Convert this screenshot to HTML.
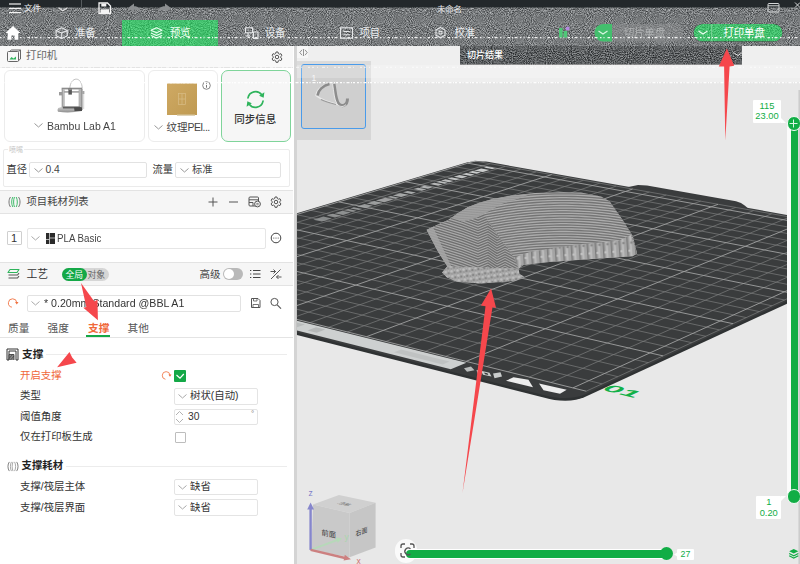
<!DOCTYPE html>
<html lang="zh-CN">
<head>
<meta charset="utf-8">
<title>Bambu Studio</title>
<style>
*{box-sizing:border-box;margin:0;padding:0}
html,body{width:800px;height:564px;overflow:hidden;background:#fff}
body{position:relative;font-family:"Liberation Sans","Noto Sans CJK SC",sans-serif;font-size:12px;color:#3c3c3c;-webkit-font-smoothing:antialiased}
.abs{position:absolute}
.t{position:absolute;white-space:nowrap;line-height:14px;height:14px;font-size:12px;color:#444}
.box{position:absolute;border:1px solid #e2e2e2;background:#fff;border-radius:2px}
.chev{position:absolute;width:9px;height:5px}
svg{position:absolute;overflow:visible}
#top{position:absolute;left:0;top:0;width:800px;height:45.5px;background:#7d7f80;overflow:hidden}
#left{position:absolute;left:0;top:0;width:293px;height:564px;background:#fff;overflow:hidden}
#view{position:absolute;left:293px;top:45px;width:507px;height:519px;background:#e8e8e8;overflow:hidden}
.hdr{position:absolute;left:0;width:293px;background:#f6f6f6;border-top:1px solid #e3e3e3;border-bottom:1px solid #e3e3e3}
.card{position:absolute;background:#fff;border:1px solid #ececec;border-radius:6px}
.tw{color:#fff}
</style>
</head>
<body>

<div id="left">
<!-- printer header -->
<div class="hdr" style="top:45px;height:23px;border-top:none;background:#f8f8f8"></div>
<svg width="16" height="14" style="left:6px;top:49px" viewBox="0 0 16 14"><g fill="none" stroke="#666" stroke-width="1"><rect x="1.500" y="2.500" width="11" height="10" rx="1"/><path d="M3.500 2.500 l2 -1.500 h9 v9 l-2 1.500 M12.500 2.500 l2 -1.500"/></g><path d="M3.500 10.500 l2 -2.500 2 1.500 2.500 -2 v3z" fill="#2fb45c"/></svg>
<div class="t" style="left:26px;top:49px;font-size:10.4px;color:#666">打印机</div>
<svg width="12" height="12" style="left:271px;top:50.500px" viewBox="0 0 24 24"><path d="M12 8.500a3.500 3.500 0 1 0 0 7a3.500 3.500 0 0 0 0-7z M10 2h4l.6 3 2.400 1.400 2.900-1 2 3.500-2.300 2v2.800l2.300 2-2 3.500-2.900-1-2.400 1.400-.6 3h-4l-.6-3-2.400-1.400-2.900 1-2-3.500 2.300-2v-2.800l-2.300-2 2-3.500 2.900 1 2.400-1.400z" fill="none" stroke="#555" stroke-width="2" stroke-linejoin="round"/></svg>
<!-- printer card -->
<div class="card" style="left:3.500px;top:70px;width:141.500px;height:71.500px"></div>
<svg width="34" height="38" style="left:54px;top:76px" viewBox="54 76 34 38">
<defs><linearGradient id="pbase" x1="0" y1="0" x2="0" y2="1"><stop offset="0" stop-color="#d2d2d2"/><stop offset="1" stop-color="#8f8f8f"/></linearGradient></defs>
<path d="M69.800 88.500 C70.500 76 82 76 82.200 88.500" fill="none" stroke="#9a9a9a" stroke-width="0.600"/>
<rect x="61.600" y="87.700" width="20.600" height="1.700" fill="#8c8c8c"/>
<rect x="61.800" y="89" width="3" height="19" fill="#bdbdbd"/><rect x="61.800" y="89" width="0.800" height="19" fill="#8e8e8e"/>
<rect x="78.600" y="89" width="3.700" height="21" fill="#b4b4b4"/><rect x="81.500" y="89" width="0.900" height="21" fill="#7d7d7d"/>
<rect x="64" y="91.100" width="15" height="1.600" fill="#a2a2a2"/>
<rect x="68.400" y="88.600" width="3.500" height="6" fill="#5a5a5a"/><rect x="68.400" y="88.600" width="3.500" height="1.500" fill="#8a8a8a"/>
<rect x="59" y="92" width="3" height="3.400" fill="#9b9b9b"/><rect x="82.200" y="91" width="2.200" height="3" fill="#a5a5a5"/>
<path d="M83.700 94 V109" stroke="#aaaaaa" stroke-width="0.500"/>
<path d="M58.200 108 L63 106.600 H80.500 L82 108 V111 Q70 113.500 58 111.800 Q56.800 110 58.200 108Z" fill="url(#pbase)"/>
<path d="M62.500 106.600 H80 L81.500 108.600 H63Z" fill="#5e5e5e"/>
<path d="M74 107.200 H82 V111 H74.500Z" fill="#4c4c4c"/>
</svg>
<svg class="chev" style="left:33.500px;top:123px" viewBox="0 0 9 5"><polyline points="0.500,0.500 4.500,4 8.500,0.500" fill="none" stroke="#999" stroke-width="1"/></svg>
<div class="t" style="left:47px;top:118.500px;font-size:11.4px;color:#444;transform:scaleX(.922);transform-origin:0 50%">Bambu Lab A1</div>
<!-- plate card -->
<div class="card" style="left:148px;top:70px;width:69.500px;height:71.500px"></div>
<svg width="34" height="36" style="left:165px;top:81px" viewBox="0 0 34 36"><defs><linearGradient id="gold" x1="0" y1="0" x2="1" y2="1"><stop offset="0" stop-color="#cfa963"/><stop offset="1" stop-color="#bf9a52"/></linearGradient></defs><rect x="2" y="2.500" width="30" height="31.500" fill="url(#gold)"/><rect x="12" y="33.500" width="18" height="1.300" fill="#d8c9a6"/><g fill="none" stroke="#d9bd86" stroke-width="0.700"><rect x="13.500" y="12.500" width="7" height="11"/><path d="M17 12.500 v11 M13.500 18 h7"/></g></svg>
<svg width="9" height="9" style="left:201.500px;top:81px" viewBox="0 0 9 9"><circle cx="4.500" cy="4.500" r="3.800" fill="#fff" stroke="#666" stroke-width="0.800"/><path d="M4.500 2.300 v.8 M4.500 4 v2.700" stroke="#666" stroke-width="0.900"/></svg>
<svg class="chev" style="left:154px;top:124.500px" viewBox="0 0 9 5"><polyline points="0.500,0.500 4.500,4 8.500,0.500" fill="none" stroke="#999" stroke-width="1"/></svg>
<div class="t" style="left:166.500px;top:120px;font-size:10.5px;color:#444">纹理<span style="letter-spacing:-0.6px">PEI...</span></div>
<!-- sync card -->
<div class="card" style="left:220.500px;top:70px;width:70.500px;height:72px;background:#f6f6f6;border:1px solid #7fd49a;border-radius:7px"></div>
<svg width="23" height="23" style="left:243.500px;top:87.500px" viewBox="0 0 22 22"><g fill="none" stroke="#2fb45c" stroke-width="1.600" stroke-linecap="round"><path d="M3.800 9.500 A7.400 7.400 0 0 1 17 6.500"/><path d="M18.200 12.500 A7.400 7.400 0 0 1 5 15.500"/></g><path d="M14.500 7.500 L19.500 4 L18.800 9.300Z" fill="#2fb45c"/><path d="M7.500 14.500 L2.500 18 L3.200 12.700Z" fill="#2fb45c"/></svg>
<div class="t" style="left:234.300px;top:112px;font-size:10.5px;color:#333;font-weight:500">同步信息</div>
<!-- nozzle group -->
<div class="abs" style="left:3px;top:149px;width:287px;height:38px;border:1px solid #ebebeb;border-radius:2px"></div>
<div class="t" style="left:8px;top:142.500px;font-size:7px;color:#c4c4c4;background:#fff;padding:0 1px">喷嘴</div>
<div class="t" style="left:6.500px;top:162.500px;font-size:10.2px;color:#333">直径</div>
<div class="box" style="left:29px;top:161.500px;width:117.500px;height:16.500px"></div>
<svg class="chev" style="left:33.500px;top:167.500px" viewBox="0 0 9 5"><polyline points="0.500,0.500 4.500,4 8.500,0.500" fill="none" stroke="#999" stroke-width="1"/></svg>
<div class="t" style="left:45.500px;top:163px;font-size:10.3px;color:#444">0.4</div>
<div class="t" style="left:152.500px;top:162.500px;font-size:10.2px;color:#333">流量</div>
<div class="box" style="left:175px;top:161.500px;width:106px;height:16.500px"></div>
<svg class="chev" style="left:179.500px;top:167.500px" viewBox="0 0 9 5"><polyline points="0.500,0.500 4.500,4 8.500,0.500" fill="none" stroke="#999" stroke-width="1"/></svg>
<div class="t" style="left:192px;top:162.500px;font-size:10.2px;color:#444">标准</div>
<!-- filament header -->
<div class="hdr" style="top:190px;height:23.500px"></div>
<svg width="13" height="12" style="left:7.500px;top:196px" viewBox="0 0 13 12"><g fill="none" stroke-width="0.900"><path d="M2.500 1 C0.500 3.500 0.500 8.500 2.500 11" stroke="#666"/><path d="M10.500 1 C12.500 3.500 12.500 8.500 10.500 11" stroke="#666"/><path d="M4.800 1 C3.300 3.500 3.300 8.500 4.800 11 M6.500 1 C5.300 3.500 5.300 8.500 6.500 11 M8.200 1 C9.700 3.500 9.700 8.500 8.200 11" stroke="#2fb45c"/></g></svg>
<div class="t" style="left:26.500px;top:195px;font-size:10.35px;color:#444">项目耗材列表</div>
<svg width="80" height="14" style="left:205px;top:195px" viewBox="205 195 80 14"><g fill="none" stroke="#555" stroke-width="1"><path d="M208.500 202 h9 M213 197.500 v9"/><path d="M229 202 h9"/><rect x="249" y="197" width="9.500" height="9" rx="1"/><path d="M249 199.800 h9.500 M249 202.500 h4 M253 202.500 v3.500"/><circle cx="257.500" cy="204" r="2.900" fill="#f6f6f6"/><path d="M256.300 203.400 h2.400 M256.300 204.800 h2.400" stroke-width="0.700"/></g></svg>
<svg width="12" height="12" style="left:269.500px;top:196px" viewBox="0 0 24 24"><path d="M12 8.500a3.500 3.500 0 1 0 0 7a3.500 3.500 0 0 0 0-7z M10 2h4l.6 3 2.400 1.400 2.900-1 2 3.500-2.300 2v2.800l2.300 2-2 3.500-2.900-1-2.400 1.400-.6 3h-4l-.6-3-2.400-1.400-2.900 1-2-3.500 2.300-2v-2.800l-2.300-2 2-3.500 2.900 1 2.400-1.400z" fill="none" stroke="#555" stroke-width="2" stroke-linejoin="round"/></svg>
<!-- filament row -->
<div class="box" style="left:7px;top:231px;width:14.500px;height:14px;border-color:#cfcfcf;border-radius:1px"></div>
<div class="t" style="left:11px;top:231px;font-size:11px;color:#333">1</div>
<div class="box" style="left:26.500px;top:227.500px;width:239px;height:21px;border-color:#e6e6e6"></div>
<svg class="chev" style="left:31px;top:236px" viewBox="0 0 9 5"><polyline points="0.500,0.500 4.500,4 8.500,0.500" fill="none" stroke="#aaa" stroke-width="1"/></svg>
<svg width="9" height="11" style="left:45.500px;top:232.500px" viewBox="0 0 9 11"><rect x="0" y="0" width="9" height="11" fill="#2b2b2b"/><path d="M3.500 0 v11 M3.500 5 h5.500 M0 6.500 h3.500" stroke="#d8d8d8" stroke-width="0.800"/></svg>
<div class="t" style="left:57px;top:231px;font-size:10.6px;color:#444;transform:scaleX(.92);transform-origin:0 50%">PLA Basic</div>
<svg width="12" height="12" style="left:269.500px;top:232px" viewBox="0 0 12 12"><circle cx="6" cy="6" r="4.800" fill="none" stroke="#444" stroke-width="1"/><circle cx="3.800" cy="6" r=".6" fill="#444"/><circle cx="6" cy="6" r=".6" fill="#444"/><circle cx="8.200" cy="6" r=".6" fill="#444"/></svg>
<!-- process header -->
<div class="hdr" style="top:262px;height:24px"></div>
<svg width="13" height="12" style="left:7px;top:268px" viewBox="0 0 13 12"><g fill="none" stroke-width="1.100" stroke-linejoin="round"><path d="M3 1.500 H12 L10 4.500 H1Z" stroke="#2fb45c"/><path d="M1.500 7 H10.500 L12 5.200" stroke="#555"/><path d="M1.500 10 H10.500 L12 8.200" stroke="#555"/></g></svg>
<div class="t" style="left:26.500px;top:267px;font-size:10.800px;color:#333">工艺</div>
<div class="abs" style="left:62px;top:267.500px;width:47px;height:13.500px;border-radius:7px;background:#d6d6d6"></div>
<div class="abs" style="left:62px;top:267.500px;width:24.500px;height:13.500px;border-radius:7px;background:#14a847"></div>
<div class="t" style="left:65.500px;top:267.500px;font-size:8.800px;color:#fff">全局</div>
<div class="t" style="left:87.500px;top:267.500px;font-size:8.800px;color:#666">对象</div>
<div class="t" style="left:199.500px;top:267px;font-size:10.500px;color:#444">高级</div>
<div class="abs" style="left:222.500px;top:268px;width:20px;height:12px;border-radius:6px;background:#b9b9b9"></div>
<div class="abs" style="left:223.500px;top:269px;width:10px;height:10px;border-radius:5px;background:#fff"></div>
<svg width="34" height="12" style="left:249px;top:268px" viewBox="249 268 34 12"><g fill="none" stroke="#444" stroke-width="1.100"><path d="M253 270.500 h7.500 M253 274 h7.500 M253 277.500 h7.500"/><path d="M250 270.500 h1.300 M250 274 h1.300 M250 277.500 h1.300"/><path d="M271 279 L280.500 269.500" stroke-width="0.900"/><path d="M270.500 271.500 h5 m-2 -2 l2 2 -2 2" stroke-width="0.900"/><path d="M281.500 277 h-5 m2 -2 l-2 2 2 2" stroke-width="0.900"/></g></svg>
<!-- preset row -->
<svg width="12" height="12" style="left:7px;top:297px" viewBox="0 0 12 12"><path d="M4.87 10.14 A4.2 4.2 0 1 1 9.78 5.63" fill="none" stroke="#f0713f" stroke-width="0.9"/><path d="M8.08 5.03 h3.4 l-1.7 2.4 z" fill="#f0713f"/></svg>
<div class="box" style="left:26.500px;top:294.500px;width:214.500px;height:17px;border-color:#e2e2e2"></div>
<svg class="chev" style="left:31px;top:301px" viewBox="0 0 9 5"><polyline points="0.500,0.500 4.500,4 8.500,0.500" fill="none" stroke="#aaa" stroke-width="1"/></svg>
<div class="t" style="left:43.500px;top:296px;font-size:11px;color:#333;transform:scaleX(.966);transform-origin:0 50%">* 0.20mm Standard @BBL A1</div>
<svg width="34" height="12" style="left:249px;top:297px" viewBox="249 297 34 12"><g fill="none" stroke="#555" stroke-width="1"><path d="M251.500 298.500 H258 L260 300.500 V307.500 H251.500Z"/><path d="M253.500 298.500 v2.500 h3.500 v-2.500 M253 307.500 v-3 h5.500 v3" stroke-width="0.800"/><circle cx="274.500" cy="302" r="3.600"/><path d="M277.200 304.800 L281 308.600" stroke-width="1.200"/></g></svg>
<!-- tabs -->
<div class="t" style="left:8px;top:321px;font-size:10.700px;color:#555">质量</div>
<div class="t" style="left:47.500px;top:321px;font-size:10.700px;color:#555">强度</div>
<div class="t" style="left:88px;top:321px;font-size:10.700px;color:#f0683a;font-weight:700">支撑</div>
<div class="t" style="left:127.500px;top:321px;font-size:10.700px;color:#555">其他</div>
<div class="abs" style="left:0;top:337px;width:293px;height:1px;background:#e4e4e4"></div>
<div class="abs" style="left:86px;top:334.500px;width:24px;height:2.500px;background:#14a847"></div>
<!-- section support -->
<svg width="13" height="13" style="left:6px;top:348px" viewBox="0 0 13 13"><path d="M1 1 H12 V12 H10 V3 H3 V12 H1Z" fill="none" stroke="#333" stroke-width="1"/><path d="M3 12 V6.500 L8 6.500 V12" fill="#888" stroke="#333" stroke-width="0.800"/><path d="M3 10.500 L6.500 6.500 M4.500 12 L8 8" stroke="#333" stroke-width="0.600"/></svg>
<div class="t" style="left:22px;top:346.800px;font-size:10.700px;color:#222;font-weight:700">支撑</div>
<div class="abs" style="left:46px;top:353.800px;width:241px;height:1px;background:#ececec"></div>
<div class="t" style="left:20px;top:369px;font-size:10.400px;color:#f0683a">开启支撑</div>
<svg width="11" height="11" style="left:161px;top:370px" viewBox="0 0 12 12"><path d="M4.87 10.14 A4.2 4.2 0 1 1 9.78 5.63" fill="none" stroke="#f0713f" stroke-width="0.9"/><path d="M8.08 5.03 h3.4 l-1.7 2.4 z" fill="#f0713f"/></svg>
<div class="abs" style="left:174px;top:369.500px;width:12px;height:12px;background:#14a847;border-radius:1px"></div>
<svg width="12" height="12" style="left:174px;top:369.500px" viewBox="0 0 12 12"><polyline points="2.500,5 6,8.200 9.800,4" fill="none" stroke="#fff" stroke-width="1.200"/></svg>
<div class="t" style="left:20px;top:389px;font-size:10.400px;color:#333">类型</div>
<div class="box" style="left:173.500px;top:388px;width:84px;height:16.500px;border-color:#e4e4e4"></div>
<svg class="chev" style="left:178px;top:394px" viewBox="0 0 9 5"><polyline points="0.500,0.500 4.500,4 8.500,0.500" fill="none" stroke="#aaa" stroke-width="1"/></svg>
<div class="t" style="left:190px;top:389px;font-size:10.400px;color:#333">树状(自动)</div>
<div class="t" style="left:20px;top:409.500px;font-size:10.400px;color:#333">阈值角度</div>
<div class="box" style="left:173.500px;top:408.500px;width:84px;height:16.500px;border-color:#e4e4e4"></div>
<svg width="9" height="14" style="left:175px;top:409.500px" viewBox="0 0 9 14"><polyline points="1,5 4.500,1.500 8,5" fill="none" stroke="#aaa" stroke-width="0.900"/><polyline points="1,9 4.500,12.500 8,9" fill="none" stroke="#aaa" stroke-width="0.900"/></svg>
<div class="t" style="left:188px;top:409.500px;font-size:10.3px;color:#333">30</div>
<div class="t" style="left:251px;top:407px;font-size:8px;color:#777">°</div>
<div class="t" style="left:20px;top:430px;font-size:10.400px;color:#333">仅在打印板生成</div>
<div class="box" style="left:174.500px;top:431.500px;width:11.500px;height:11.500px;border-color:#bdbdbd;border-radius:1px"></div>
<!-- section support filament -->
<svg width="12" height="11" style="left:6.500px;top:460.500px" viewBox="0 0 13 12"><g fill="none" stroke-width="0.900" stroke="#666"><path d="M2.500 1 C0.500 3.500 0.500 8.500 2.500 11"/><path d="M10.500 1 C12.500 3.500 12.500 8.500 10.500 11"/><path d="M4.800 1 C3.300 3.500 3.300 8.500 4.800 11 M6.500 1 C5.300 3.500 5.300 8.500 6.500 11 M8.200 1 C9.700 3.500 9.700 8.500 8.200 11" stroke="#999"/></g></svg>
<div class="t" style="left:21.500px;top:458.700px;font-size:10.400px;color:#222;font-weight:700">支撑耗材</div>
<div class="abs" style="left:66px;top:465.500px;width:221px;height:1px;background:#ececec"></div>
<div class="t" style="left:20px;top:480px;font-size:10.400px;color:#333">支撑/筏层主体</div>
<div class="box" style="left:173.500px;top:478.500px;width:84px;height:16.500px;border-color:#e4e4e4"></div>
<svg class="chev" style="left:178px;top:484.500px" viewBox="0 0 9 5"><polyline points="0.500,0.500 4.500,4 8.500,0.500" fill="none" stroke="#aaa" stroke-width="1"/></svg>
<div class="t" style="left:190px;top:480px;font-size:10.400px;color:#333">缺省</div>
<div class="t" style="left:20px;top:500.500px;font-size:10.400px;color:#333">支撑/筏层界面</div>
<div class="box" style="left:173.500px;top:499px;width:84px;height:16.500px;border-color:#e4e4e4"></div>
<svg class="chev" style="left:178px;top:505px" viewBox="0 0 9 5"><polyline points="0.500,0.500 4.500,4 8.500,0.500" fill="none" stroke="#aaa" stroke-width="1"/></svg>
<div class="t" style="left:190px;top:500.500px;font-size:10.400px;color:#333">缺省</div>
</div>
<div class="abs" style="left:293.500px;top:45.500px;width:3.300px;height:519px;background:#d4d4d4"></div>

<svg width="800" height="564" style="left:0;top:0" viewBox="0 0 800 564">
<defs><clipPath id="vc"><rect x="296.8" y="45.5" width="503.2" height="518.5"/></clipPath>
<clipPath id="bedclip"><rect x="296.8" y="45.5" width="490.2" height="518.5"/></clipPath>
<pattern id="stripes" width="40" height="3.1" patternUnits="userSpaceOnUse" patternTransform="rotate(9)"><rect width="40" height="3.1" fill="#a3a3a3"/><path d="M0 2.3 Q10 1.2 20 2.3 T40 2.3" stroke="#757575" stroke-width="0.9" fill="none"/></pattern>
<pattern id="stripes2" width="40" height="3.1" patternUnits="userSpaceOnUse" patternTransform="rotate(24)"><rect width="40" height="3.1" fill="#999"/><path d="M0 2.3 H40" stroke="#6e6e6e" stroke-width="0.9" fill="none"/></pattern>
<pattern id="bumps" width="6" height="5" patternUnits="userSpaceOnUse" patternTransform="rotate(-8)"><rect width="6" height="5" fill="#a6a6a6"/><circle cx="1.5" cy="1.5" r="1.2" fill="#c2c2c2"/><circle cx="4.3" cy="3.2" r="1.1" fill="#828282"/><circle cx="4.5" cy="0.8" r="0.7" fill="#b8b8b8"/><circle cx="1.4" cy="4" r="0.7" fill="#8d8d8d"/></pattern>
<pattern id="posts" width="8" height="40" patternUnits="userSpaceOnUse" patternTransform="rotate(-4)"><rect width="8" height="40" fill="#a4a4a4"/><rect x="0" y="0" width="1.6" height="40" fill="#7e7e7e"/><rect x="3.2" y="0" width="2" height="40" fill="#bcbcbc"/><circle cx="5" cy="6" r="1.3" fill="#8a8a8a"/><circle cx="2.5" cy="14" r="1.2" fill="#c6c6c6"/><circle cx="6" cy="22" r="1.3" fill="#858585"/><circle cx="3" cy="31" r="1.2" fill="#c2c2c2"/><circle cx="6.5" cy="37" r="1" fill="#909090"/></pattern>
</defs>
<g clip-path="url(#vc)">
<rect x="296.8" y="45.5" width="503.2" height="519" fill="#e8e8e8"/>
<rect x="296.8" y="45.5" width="503.2" height="36.5" fill="#efefef"/>
<g clip-path="url(#bedclip)">
<polygon points="97.2,275.6 94.0,276.8 91.7,278.1 90.4,279.4 90.1,280.7 90.9,282.0 92.7,283.1 95.5,284.0 549.5,399.0 554.3,399.9 559.7,400.5 565.2,400.7 570.8,400.4 576.0,399.7 580.6,398.6 584.3,397.3 912.6,245.8 914.2,244.7 914.8,243.6 914.5,242.4 913.1,241.2 910.8,240.1 907.8,239.1 904.0,238.3 489.2,164.7 485.9,164.2 482.3,164.0 478.5,163.9 474.6,164.0 471.0,164.4 467.7,164.9 465.0,165.5" fill="#2f3233"/>
<polygon points="97.2,273.0 94.0,274.2 91.7,275.5 90.4,276.8 90.1,278.1 90.9,279.4 92.7,280.5 95.5,281.4 549.5,396.4 554.3,397.3 559.7,397.9 565.2,398.1 570.8,397.8 576.0,397.1 580.6,396.0 584.3,394.7 912.6,243.2 914.2,242.1 914.8,241.0 914.5,239.8 913.1,238.6 910.8,237.5 907.8,236.5 904.0,235.7 489.2,162.1 485.9,161.6 482.3,161.4 478.5,161.3 474.6,161.4 471.0,161.8 467.7,162.3 465.0,162.9" fill="#3a3c3d"/>
<polygon points="627.0,187.6 632.0,186.2 638.0,185.1 647.0,185.5 736.0,201.3 741.0,203.0 745.0,205.7 749.0,209.2" fill="#3a3c3d"/>
<path d="M121.4 275.8L490.0 163.7M122.8 266.7L602.2 383.9M137.4 279.8L505.2 166.4M139.9 261.5L617.9 376.7M153.7 283.8L520.5 169.1M156.6 256.5L633.2 369.6M170.2 287.9L536.0 171.9M173.1 251.6L648.3 362.7M203.8 296.3L567.5 177.5M205.4 241.9L677.6 349.2M220.9 300.5L583.5 180.3M221.1 237.2L691.8 342.7M238.2 304.8L599.7 183.2M236.6 232.5L705.8 336.3M255.8 309.2L616.1 186.1M251.9 227.9L719.5 329.9M291.7 318.1L649.3 192.0M281.7 219.0L746.3 317.6M310.0 322.6L666.2 195.0M296.3 214.6L759.3 311.6M328.6 327.3L683.3 198.1M310.7 210.3L772.1 305.8M347.4 331.9L700.6 201.1M324.8 206.1L784.6 300.0M385.8 341.5L735.7 207.4M352.5 197.7L809.1 288.7M405.4 346.3L753.6 210.6M366.1 193.7L821.1 283.2M425.3 351.3L771.7 213.8M379.4 189.7L832.8 277.8M445.5 356.3L789.9 217.0M392.6 185.7L844.4 272.5M486.7 366.5L827.1 223.7M418.4 178.0L866.9 262.1M507.8 371.8L846.1 227.0M431.0 174.2L877.9 257.1M529.2 377.1L865.2 230.4M443.4 170.5L888.8 252.1M550.9 382.5L884.6 233.9M455.7 166.8L899.4 247.2M586.2 391.2L916.1 239.5M475.0 161.0L916.1 239.5" stroke="#7c7e7e" stroke-width="0.7" fill="none"/>
<path d="M105.5 271.9L475.0 161.0M105.5 271.9L586.2 391.2M186.9 292.1L551.7 174.6M189.4 246.7L663.1 355.9M273.7 313.6L632.6 189.0M266.9 223.4L733.0 323.7M366.5 336.7L718.0 204.3M338.8 201.9L797.0 294.3M466.0 361.4L808.4 220.3M405.6 181.8L855.8 267.3M572.9 387.9L904.2 237.4M467.8 163.2L909.9 242.4" stroke="#a0a2a2" stroke-width="0.9" fill="none"/>
<polygon points="83.8,276.6 450.8,369.2 466.4,362.8 100.3,271.7" fill="#cdd0d0" />
<polygon points="259.8,318.4 267.0,320.2 275.7,317.2 268.5,315.4" fill="#b5b8b8" />
<polygon points="281.6,323.9 296.3,327.6 304.9,324.5 290.2,320.8" fill="#b9bcbc" />
<polygon points="307.4,330.4 316.7,332.7 325.3,329.6 316.0,327.3" fill="#b5b8b8" />
<polygon points="394.2,352.2 442.7,364.4 449.4,361.6 401.0,349.6" fill="#bfc2c2" />
<polygon points="513.5,377.2 528.5,379.8 533.0,387.2 506.0,380.8" fill="#ededed" />
<polygon points="539.0,383.5 566.7,389.8 560.0,393.7 543.5,390.2" fill="#ededed" />
<polygon points="464.0,368.3 471.0,366.6 474.5,370.2 467.0,371.8" fill="#b9bcbc" />
<polygon points="476.5,370.2 479.5,369.6 481.5,374.6 478.0,374.4" fill="#c4c7c7" />
<polygon points="481.0,370.8 489.5,372.8 491.5,376.6 483.0,374.8" fill="#c9cccc" />
<polygon points="484.0,372.4 487.5,373.2 488.3,375.0 485.0,374.3" fill="#3a3d3e" />
<polygon points="493.0,373.6 500.5,372.2 502.0,376.6 494.5,378.2" fill="#c9cccc" />
<polygon points="313.3,219.7 321.8,221.4 331.9,218.4 323.4,216.6" fill="#9a9c9c" opacity="0.80"/>
<polygon points="326.5,215.6 335.0,217.4 341.4,215.4 332.9,213.7" fill="#9ea0a0" opacity="0.81"/>
<polygon points="334.6,213.2 343.1,214.9 350.9,212.5 342.4,210.8" fill="#a0a2a2" opacity="0.82"/>
<polygon points="344.6,210.1 353.1,211.8 356.6,210.8 348.1,209.0" fill="#a3a5a5" opacity="0.83"/>
<polygon points="350.4,208.4 358.8,210.1 362.3,209.0 353.8,207.3" fill="#a5a7a7" opacity="0.84"/>
<polygon points="356.9,206.4 365.3,208.1 372.9,205.7 364.5,204.0" fill="#a7a9a9" opacity="0.85"/>
<polygon points="366.7,203.4 375.1,205.1 382.6,202.8 374.2,201.1" fill="#aaacac" opacity="0.86"/>
<polygon points="375.8,200.6 384.2,202.3 393.6,199.4 385.2,197.7" fill="#adafaf" opacity="0.87"/>
<polygon points="387.4,197.1 395.7,198.7 399.1,197.7 390.7,196.0" fill="#b1b3b3" opacity="0.88"/>
<polygon points="392.8,195.4 401.2,197.0 408.5,194.8 400.1,193.2" fill="#b2b4b4" opacity="0.89"/>
<polygon points="403.0,192.3 411.4,193.9 416.0,192.5 407.6,190.9" fill="#b6b8b8" opacity="0.90"/>
<polygon points="413.5,189.1 421.8,190.7 426.4,189.3 418.0,187.7" fill="#b9bbbb" opacity="0.91"/>
<polygon points="419.6,187.2 427.9,188.8 432.4,187.4 424.1,185.8" fill="#bbbdbd" opacity="0.92"/>
<polygon points="429.8,184.1 438.2,185.7 442.6,184.3 434.3,182.7" fill="#bfc1c1" opacity="0.93"/>
<polygon points="436.3,182.1 444.6,183.7 447.8,182.7 439.5,181.1" fill="#c1c3c3" opacity="0.94"/>
<polygon points="441.0,180.7 449.3,182.2 453.7,180.9 445.4,179.3" fill="#c3c5c5" opacity="0.94"/>
<polygon points="447.4,178.7 455.7,180.3 460.1,178.9 451.8,177.4" fill="#c5c7c7" opacity="0.95"/>
<polygon points="453.8,176.8 462.1,178.3 467.6,176.6 459.4,175.1" fill="#c7c9c9" opacity="0.96"/>
<polygon points="462.1,174.2 470.3,175.8 474.6,174.4 466.4,172.9" fill="#cacccc" opacity="0.97"/>
<polygon points="468.3,172.3 476.6,173.8 480.8,172.5 472.6,171.0" fill="#cccece" opacity="0.98"/>
<polygon points="474.6,170.4 482.8,171.9 489.4,169.9 481.2,168.4" fill="#cfd1d1" opacity="0.98"/>
<polygon points="483.9,167.6 492.1,169.1 495.1,168.2 486.9,166.7" fill="#d2d4d4" opacity="0.99"/>
<text transform="matrix(1.55 0.39 -0.8 0.37 600.5 389.5)" x="0" y="0" font-family="Liberation Sans, sans-serif" font-weight="700" font-size="19.5" fill="#12b048">01</text>
</g>
<clipPath id="mclip"><polygon points="426.5,229.7 440.0,223.5 448.0,220.0 458.0,213.0 468.0,207.0 480.0,202.5 492.5,199.0 512.0,195.5 535.0,193.0 560.0,192.2 581.0,192.4 601.1,196.5 609.8,201.6 622.0,219.0 632.8,236.1 637.1,253.4 632.8,256.3 592.5,259.1 549.4,262.0 523.5,264.9 518.6,268.7 519.5,274.0 524.0,276.5 516.0,280.5 507.4,281.5 481.4,283.6 457.0,281.7 447.0,277.5 442.0,272.4 447.3,266.3 437.3,250.5"/></clipPath>
<polygon points="426.5,229.7 440.0,223.5 448.0,220.0 458.0,213.0 468.0,207.0 480.0,202.5 492.5,199.0 512.0,195.5 535.0,193.0 560.0,192.2 581.0,192.4 601.1,196.5 609.8,201.6 622.0,219.0 632.8,236.1 637.1,253.4 632.8,256.3 592.5,259.1 549.4,262.0 523.5,264.9 518.6,268.7 519.5,274.0 524.0,276.5 516.0,280.5 507.4,281.5 481.4,283.6 457.0,281.7 447.0,277.5 442.0,272.4 447.3,266.3 437.3,250.5" fill="#acacac"/>
<g clip-path="url(#mclip)">
<path d="M470.0 197.2L476.0 195.8L482.0 194.5L488.0 193.3L494.0 192.2L500.0 191.2L506.0 190.2L512.0 189.4L518.0 188.6L524.0 188.0L530.0 187.4L536.0 186.9L542.0 186.6L548.0 186.3L554.0 186.1L560.0 186.0L566.0 186.0L572.0 186.1L578.0 186.3L584.0 186.6L590.0 186.9L596.0 187.4L602.0 188.0L608.0 188.6L614.0 189.4L620.0 190.2L626.0 191.2L632.0 192.2L638.0 193.3L644.0 194.5M470.0 199.8L476.0 198.4L482.0 197.1L488.0 195.9L494.0 194.8L500.0 193.8L506.0 192.8L512.0 192.0L518.0 191.2L524.0 190.6L530.0 190.0L536.0 189.5L542.0 189.2L548.0 188.9L554.0 188.7L560.0 188.6L566.0 188.6L572.0 188.7L578.0 188.9L584.0 189.2L590.0 189.5L596.0 190.0L602.0 190.6L608.0 191.2L614.0 192.0L620.0 192.8L626.0 193.8L632.0 194.8L638.0 195.9L644.0 197.1M470.0 202.4L476.0 201.0L482.0 199.7L488.0 198.5L494.0 197.4L500.0 196.4L506.0 195.4L512.0 194.6L518.0 193.8L524.0 193.2L530.0 192.6L536.0 192.1L542.0 191.8L548.0 191.5L554.0 191.3L560.0 191.2L566.0 191.2L572.0 191.3L578.0 191.5L584.0 191.8L590.0 192.1L596.0 192.6L602.0 193.2L608.0 193.8L614.0 194.6L620.0 195.4L626.0 196.4L632.0 197.4L638.0 198.5L644.0 199.7M470.0 205.0L476.0 203.6L482.0 202.3L488.0 201.1L494.0 200.0L500.0 199.0L506.0 198.0L512.0 197.2L518.0 196.4L524.0 195.8L530.0 195.2L536.0 194.7L542.0 194.4L548.0 194.1L554.0 193.9L560.0 193.8L566.0 193.8L572.0 193.9L578.0 194.1L584.0 194.4L590.0 194.7L596.0 195.2L602.0 195.8L608.0 196.4L614.0 197.2L620.0 198.0L626.0 199.0L632.0 200.0L638.0 201.1L644.0 202.3M470.0 207.6L476.0 206.2L482.0 204.9L488.0 203.7L494.0 202.6L500.0 201.6L506.0 200.6L512.0 199.8L518.0 199.0L524.0 198.4L530.0 197.8L536.0 197.3L542.0 197.0L548.0 196.7L554.0 196.5L560.0 196.4L566.0 196.4L572.0 196.5L578.0 196.7L584.0 197.0L590.0 197.3L596.0 197.8L602.0 198.4L608.0 199.0L614.0 199.8L620.0 200.6L626.0 201.6L632.0 202.6L638.0 203.7L644.0 204.9M470.0 210.2L476.0 208.8L482.0 207.5L488.0 206.3L494.0 205.2L500.0 204.2L506.0 203.2L512.0 202.4L518.0 201.6L524.0 201.0L530.0 200.4L536.0 199.9L542.0 199.6L548.0 199.3L554.0 199.1L560.0 199.0L566.0 199.0L572.0 199.1L578.0 199.3L584.0 199.6L590.0 199.9L596.0 200.4L602.0 201.0L608.0 201.6L614.0 202.4L620.0 203.2L626.0 204.2L632.0 205.2L638.0 206.3L644.0 207.5M470.0 212.8L476.0 211.4L482.0 210.1L488.0 208.9L494.0 207.8L500.0 206.8L506.0 205.8L512.0 205.0L518.0 204.2L524.0 203.6L530.0 203.0L536.0 202.5L542.0 202.2L548.0 201.9L554.0 201.7L560.0 201.6L566.0 201.6L572.0 201.7L578.0 201.9L584.0 202.2L590.0 202.5L596.0 203.0L602.0 203.6L608.0 204.2L614.0 205.0L620.0 205.8L626.0 206.8L632.0 207.8L638.0 208.9L644.0 210.1M470.0 215.4L476.0 214.0L482.0 212.7L488.0 211.5L494.0 210.4L500.0 209.4L506.0 208.4L512.0 207.6L518.0 206.8L524.0 206.2L530.0 205.6L536.0 205.1L542.0 204.8L548.0 204.5L554.0 204.3L560.0 204.2L566.0 204.2L572.0 204.3L578.0 204.5L584.0 204.8L590.0 205.1L596.0 205.6L602.0 206.2L608.0 206.8L614.0 207.6L620.0 208.4L626.0 209.4L632.0 210.4L638.0 211.5L644.0 212.7M470.0 218.0L476.0 216.6L482.0 215.3L488.0 214.1L494.0 213.0L500.0 212.0L506.0 211.0L512.0 210.2L518.0 209.4L524.0 208.8L530.0 208.2L536.0 207.7L542.0 207.4L548.0 207.1L554.0 206.9L560.0 206.8L566.0 206.8L572.0 206.9L578.0 207.1L584.0 207.4L590.0 207.7L596.0 208.2L602.0 208.8L608.0 209.4L614.0 210.2L620.0 211.0L626.0 212.0L632.0 213.0L638.0 214.1L644.0 215.3M470.0 220.6L476.0 219.2L482.0 217.9L488.0 216.7L494.0 215.6L500.0 214.6L506.0 213.6L512.0 212.8L518.0 212.0L524.0 211.4L530.0 210.8L536.0 210.3L542.0 210.0L548.0 209.7L554.0 209.5L560.0 209.4L566.0 209.4L572.0 209.5L578.0 209.7L584.0 210.0L590.0 210.3L596.0 210.8L602.0 211.4L608.0 212.0L614.0 212.8L620.0 213.6L626.0 214.6L632.0 215.6L638.0 216.7L644.0 217.9M470.0 223.2L476.0 221.8L482.0 220.5L488.0 219.3L494.0 218.2L500.0 217.2L506.0 216.2L512.0 215.4L518.0 214.6L524.0 214.0L530.0 213.4L536.0 212.9L542.0 212.6L548.0 212.3L554.0 212.1L560.0 212.0L566.0 212.0L572.0 212.1L578.0 212.3L584.0 212.6L590.0 212.9L596.0 213.4L602.0 214.0L608.0 214.6L614.0 215.4L620.0 216.2L626.0 217.2L632.0 218.2L638.0 219.3L644.0 220.5M470.0 225.8L476.0 224.4L482.0 223.1L488.0 221.9L494.0 220.8L500.0 219.8L506.0 218.8L512.0 218.0L518.0 217.2L524.0 216.6L530.0 216.0L536.0 215.5L542.0 215.2L548.0 214.9L554.0 214.7L560.0 214.6L566.0 214.6L572.0 214.7L578.0 214.9L584.0 215.2L590.0 215.5L596.0 216.0L602.0 216.6L608.0 217.2L614.0 218.0L620.0 218.8L626.0 219.8L632.0 220.8L638.0 221.9L644.0 223.1M470.0 228.4L476.0 227.0L482.0 225.7L488.0 224.5L494.0 223.4L500.0 222.4L506.0 221.4L512.0 220.6L518.0 219.8L524.0 219.2L530.0 218.6L536.0 218.1L542.0 217.8L548.0 217.5L554.0 217.3L560.0 217.2L566.0 217.2L572.0 217.3L578.0 217.5L584.0 217.8L590.0 218.1L596.0 218.6L602.0 219.2L608.0 219.8L614.0 220.6L620.0 221.4L626.0 222.4L632.0 223.4L638.0 224.5L644.0 225.7M470.0 231.0L476.0 229.6L482.0 228.3L488.0 227.1L494.0 226.0L500.0 225.0L506.0 224.0L512.0 223.2L518.0 222.4L524.0 221.8L530.0 221.2L536.0 220.7L542.0 220.4L548.0 220.1L554.0 219.9L560.0 219.8L566.0 219.8L572.0 219.9L578.0 220.1L584.0 220.4L590.0 220.7L596.0 221.2L602.0 221.8L608.0 222.4L614.0 223.2L620.0 224.0L626.0 225.0L632.0 226.0L638.0 227.1L644.0 228.3M470.0 233.6L476.0 232.2L482.0 230.9L488.0 229.7L494.0 228.6L500.0 227.6L506.0 226.6L512.0 225.8L518.0 225.0L524.0 224.4L530.0 223.8L536.0 223.3L542.0 223.0L548.0 222.7L554.0 222.5L560.0 222.4L566.0 222.4L572.0 222.5L578.0 222.7L584.0 223.0L590.0 223.3L596.0 223.8L602.0 224.4L608.0 225.0L614.0 225.8L620.0 226.6L626.0 227.6L632.0 228.6L638.0 229.7L644.0 230.9M470.0 236.2L476.0 234.8L482.0 233.5L488.0 232.3L494.0 231.2L500.0 230.2L506.0 229.2L512.0 228.4L518.0 227.6L524.0 227.0L530.0 226.4L536.0 225.9L542.0 225.6L548.0 225.3L554.0 225.1L560.0 225.0L566.0 225.0L572.0 225.1L578.0 225.3L584.0 225.6L590.0 225.9L596.0 226.4L602.0 227.0L608.0 227.6L614.0 228.4L620.0 229.2L626.0 230.2L632.0 231.2L638.0 232.3L644.0 233.5M470.0 238.8L476.0 237.4L482.0 236.1L488.0 234.9L494.0 233.8L500.0 232.8L506.0 231.8L512.0 231.0L518.0 230.2L524.0 229.6L530.0 229.0L536.0 228.5L542.0 228.2L548.0 227.9L554.0 227.7L560.0 227.6L566.0 227.6L572.0 227.7L578.0 227.9L584.0 228.2L590.0 228.5L596.0 229.0L602.0 229.6L608.0 230.2L614.0 231.0L620.0 231.8L626.0 232.8L632.0 233.8L638.0 234.9L644.0 236.1M470.0 241.4L476.0 240.0L482.0 238.7L488.0 237.5L494.0 236.4L500.0 235.4L506.0 234.4L512.0 233.6L518.0 232.8L524.0 232.2L530.0 231.6L536.0 231.1L542.0 230.8L548.0 230.5L554.0 230.3L560.0 230.2L566.0 230.2L572.0 230.3L578.0 230.5L584.0 230.8L590.0 231.1L596.0 231.6L602.0 232.2L608.0 232.8L614.0 233.6L620.0 234.4L626.0 235.4L632.0 236.4L638.0 237.5L644.0 238.7M470.0 244.0L476.0 242.6L482.0 241.3L488.0 240.1L494.0 239.0L500.0 238.0L506.0 237.0L512.0 236.2L518.0 235.4L524.0 234.8L530.0 234.2L536.0 233.7L542.0 233.4L548.0 233.1L554.0 232.9L560.0 232.8L566.0 232.8L572.0 232.9L578.0 233.1L584.0 233.4L590.0 233.7L596.0 234.2L602.0 234.8L608.0 235.4L614.0 236.2L620.0 237.0L626.0 238.0L632.0 239.0L638.0 240.1L644.0 241.3M470.0 246.6L476.0 245.2L482.0 243.9L488.0 242.7L494.0 241.6L500.0 240.6L506.0 239.6L512.0 238.8L518.0 238.0L524.0 237.4L530.0 236.8L536.0 236.3L542.0 236.0L548.0 235.7L554.0 235.5L560.0 235.4L566.0 235.4L572.0 235.5L578.0 235.7L584.0 236.0L590.0 236.3L596.0 236.8L602.0 237.4L608.0 238.0L614.0 238.8L620.0 239.6L626.0 240.6L632.0 241.6L638.0 242.7L644.0 243.9M470.0 249.2L476.0 247.8L482.0 246.5L488.0 245.3L494.0 244.2L500.0 243.2L506.0 242.2L512.0 241.4L518.0 240.6L524.0 240.0L530.0 239.4L536.0 238.9L542.0 238.6L548.0 238.3L554.0 238.1L560.0 238.0L566.0 238.0L572.0 238.1L578.0 238.3L584.0 238.6L590.0 238.9L596.0 239.4L602.0 240.0L608.0 240.6L614.0 241.4L620.0 242.2L626.0 243.2L632.0 244.2L638.0 245.3L644.0 246.5M470.0 251.8L476.0 250.4L482.0 249.1L488.0 247.9L494.0 246.8L500.0 245.8L506.0 244.8L512.0 244.0L518.0 243.2L524.0 242.6L530.0 242.0L536.0 241.5L542.0 241.2L548.0 240.9L554.0 240.7L560.0 240.6L566.0 240.6L572.0 240.7L578.0 240.9L584.0 241.2L590.0 241.5L596.0 242.0L602.0 242.6L608.0 243.2L614.0 244.0L620.0 244.8L626.0 245.8L632.0 246.8L638.0 247.9L644.0 249.1M470.0 254.4L476.0 253.0L482.0 251.7L488.0 250.5L494.0 249.4L500.0 248.4L506.0 247.4L512.0 246.6L518.0 245.8L524.0 245.2L530.0 244.6L536.0 244.1L542.0 243.8L548.0 243.5L554.0 243.3L560.0 243.2L566.0 243.2L572.0 243.3L578.0 243.5L584.0 243.8L590.0 244.1L596.0 244.6L602.0 245.2L608.0 245.8L614.0 246.6L620.0 247.4L626.0 248.4L632.0 249.4L638.0 250.5L644.0 251.7M470.0 257.0L476.0 255.6L482.0 254.3L488.0 253.1L494.0 252.0L500.0 251.0L506.0 250.0L512.0 249.2L518.0 248.4L524.0 247.8L530.0 247.2L536.0 246.7L542.0 246.4L548.0 246.1L554.0 245.9L560.0 245.8L566.0 245.8L572.0 245.9L578.0 246.1L584.0 246.4L590.0 246.7L596.0 247.2L602.0 247.8L608.0 248.4L614.0 249.2L620.0 250.0L626.0 251.0L632.0 252.0L638.0 253.1L644.0 254.3M470.0 259.6L476.0 258.2L482.0 256.9L488.0 255.7L494.0 254.6L500.0 253.6L506.0 252.6L512.0 251.8L518.0 251.0L524.0 250.4L530.0 249.8L536.0 249.3L542.0 249.0L548.0 248.7L554.0 248.5L560.0 248.4L566.0 248.4L572.0 248.5L578.0 248.7L584.0 249.0L590.0 249.3L596.0 249.8L602.0 250.4L608.0 251.0L614.0 251.8L620.0 252.6L626.0 253.6L632.0 254.6L638.0 255.7L644.0 256.9M470.0 262.2L476.0 260.8L482.0 259.5L488.0 258.3L494.0 257.2L500.0 256.2L506.0 255.2L512.0 254.4L518.0 253.6L524.0 253.0L530.0 252.4L536.0 251.9L542.0 251.6L548.0 251.3L554.0 251.1L560.0 251.0L566.0 251.0L572.0 251.1L578.0 251.3L584.0 251.6L590.0 251.9L596.0 252.4L602.0 253.0L608.0 253.6L614.0 254.4L620.0 255.2L626.0 256.2L632.0 257.2L638.0 258.3L644.0 259.5M470.0 264.8L476.0 263.4L482.0 262.1L488.0 260.9L494.0 259.8L500.0 258.8L506.0 257.8L512.0 257.0L518.0 256.2L524.0 255.6L530.0 255.0L536.0 254.5L542.0 254.2L548.0 253.9L554.0 253.7L560.0 253.6L566.0 253.6L572.0 253.7L578.0 253.9L584.0 254.2L590.0 254.5L596.0 255.0L602.0 255.6L608.0 256.2L614.0 257.0L620.0 257.8L626.0 258.8L632.0 259.8L638.0 260.9L644.0 262.1M470.0 267.4L476.0 266.0L482.0 264.7L488.0 263.5L494.0 262.4L500.0 261.4L506.0 260.4L512.0 259.6L518.0 258.8L524.0 258.2L530.0 257.6L536.0 257.1L542.0 256.8L548.0 256.5L554.0 256.3L560.0 256.2L566.0 256.2L572.0 256.3L578.0 256.5L584.0 256.8L590.0 257.1L596.0 257.6L602.0 258.2L608.0 258.8L614.0 259.6L620.0 260.4L626.0 261.4L632.0 262.4L638.0 263.5L644.0 264.7M470.0 270.0L476.0 268.6L482.0 267.3L488.0 266.1L494.0 265.0L500.0 264.0L506.0 263.0L512.0 262.2L518.0 261.4L524.0 260.8L530.0 260.2L536.0 259.7L542.0 259.4L548.0 259.1L554.0 258.9L560.0 258.8L566.0 258.8L572.0 258.9L578.0 259.1L584.0 259.4L590.0 259.7L596.0 260.2L602.0 260.8L608.0 261.4L614.0 262.2L620.0 263.0L626.0 264.0L632.0 265.0L638.0 266.1L644.0 267.3M470.0 272.6L476.0 271.2L482.0 269.9L488.0 268.7L494.0 267.6L500.0 266.6L506.0 265.6L512.0 264.8L518.0 264.0L524.0 263.4L530.0 262.8L536.0 262.3L542.0 262.0L548.0 261.7L554.0 261.5L560.0 261.4L566.0 261.4L572.0 261.5L578.0 261.7L584.0 262.0L590.0 262.3L596.0 262.8L602.0 263.4L608.0 264.0L614.0 264.8L620.0 265.6L626.0 266.6L632.0 267.6L638.0 268.7L644.0 269.9M470.0 275.2L476.0 273.8L482.0 272.5L488.0 271.3L494.0 270.2L500.0 269.2L506.0 268.2L512.0 267.4L518.0 266.6L524.0 266.0L530.0 265.4L536.0 264.9L542.0 264.6L548.0 264.3L554.0 264.1L560.0 264.0L566.0 264.0L572.0 264.1L578.0 264.3L584.0 264.6L590.0 264.9L596.0 265.4L602.0 266.0L608.0 266.6L614.0 267.4L620.0 268.2L626.0 269.2L632.0 270.2L638.0 271.3L644.0 272.5M470.0 277.8L476.0 276.4L482.0 275.1L488.0 273.9L494.0 272.8L500.0 271.8L506.0 270.8L512.0 270.0L518.0 269.2L524.0 268.6L530.0 268.0L536.0 267.5L542.0 267.2L548.0 266.9L554.0 266.7L560.0 266.6L566.0 266.6L572.0 266.7L578.0 266.9L584.0 267.2L590.0 267.5L596.0 268.0L602.0 268.6L608.0 269.2L614.0 270.0L620.0 270.8L626.0 271.8L632.0 272.8L638.0 273.9L644.0 275.1M470.0 280.4L476.0 279.0L482.0 277.7L488.0 276.5L494.0 275.4L500.0 274.4L506.0 273.4L512.0 272.6L518.0 271.8L524.0 271.2L530.0 270.6L536.0 270.1L542.0 269.8L548.0 269.5L554.0 269.3L560.0 269.2L566.0 269.2L572.0 269.3L578.0 269.5L584.0 269.8L590.0 270.1L596.0 270.6L602.0 271.2L608.0 271.8L614.0 272.6L620.0 273.4L626.0 274.4L632.0 275.4L638.0 276.5L644.0 277.7M470.0 283.0L476.0 281.6L482.0 280.3L488.0 279.1L494.0 278.0L500.0 277.0L506.0 276.0L512.0 275.2L518.0 274.4L524.0 273.8L530.0 273.2L536.0 272.7L542.0 272.4L548.0 272.1L554.0 271.9L560.0 271.8L566.0 271.8L572.0 271.9L578.0 272.1L584.0 272.4L590.0 272.7L596.0 273.2L602.0 273.8L608.0 274.4L614.0 275.2L620.0 276.0L626.0 277.0L632.0 278.0L638.0 279.1L644.0 280.3" stroke="#747474" stroke-width="1.3" fill="none"/>
<clipPath id="lclip"><polygon points="426.5,229.7 448.0,220.0 468.0,207.0 481.0,209.5 492.6,227.8 506.0,246.0 515.0,259.4 518.6,268.7 447.3,268.0 437.3,250.5"/></clipPath>
<polygon points="426.5,229.7 448.0,220.0 468.0,207.0 481.0,209.5 492.6,227.8 506.0,246.0 515.0,259.4 518.6,268.7 447.3,268.0 437.3,250.5" fill="#a8a8a8"/>
<path d="M420 196.0 L462 209.0 L478 215.0 L488 211.0 L497 217.0 L505 213.0 L522 222.0M420 198.6 L462 211.6 L478 217.6 L488 213.6 L497 219.6 L505 215.6 L522 224.6M420 201.2 L462 214.2 L478 220.2 L488 216.2 L497 222.2 L505 218.2 L522 227.2M420 203.8 L462 216.8 L478 222.8 L488 218.8 L497 224.8 L505 220.8 L522 229.8M420 206.4 L462 219.4 L478 225.4 L488 221.4 L497 227.4 L505 223.4 L522 232.4M420 209.0 L462 222.0 L478 228.0 L488 224.0 L497 230.0 L505 226.0 L522 235.0M420 211.6 L462 224.6 L478 230.6 L488 226.6 L497 232.6 L505 228.6 L522 237.6M420 214.2 L462 227.2 L478 233.2 L488 229.2 L497 235.2 L505 231.2 L522 240.2M420 216.8 L462 229.8 L478 235.8 L488 231.8 L497 237.8 L505 233.8 L522 242.8M420 219.4 L462 232.4 L478 238.4 L488 234.4 L497 240.4 L505 236.4 L522 245.4M420 222.0 L462 235.0 L478 241.0 L488 237.0 L497 243.0 L505 239.0 L522 248.0M420 224.6 L462 237.6 L478 243.6 L488 239.6 L497 245.6 L505 241.6 L522 250.6M420 227.2 L462 240.2 L478 246.2 L488 242.2 L497 248.2 L505 244.2 L522 253.2M420 229.8 L462 242.8 L478 248.8 L488 244.8 L497 250.8 L505 246.8 L522 255.8M420 232.4 L462 245.4 L478 251.4 L488 247.4 L497 253.4 L505 249.4 L522 258.4M420 235.0 L462 248.0 L478 254.0 L488 250.0 L497 256.0 L505 252.0 L522 261.0M420 237.6 L462 250.6 L478 256.6 L488 252.6 L497 258.6 L505 254.6 L522 263.6M420 240.2 L462 253.2 L478 259.2 L488 255.2 L497 261.2 L505 257.2 L522 266.2M420 242.8 L462 255.8 L478 261.8 L488 257.8 L497 263.8 L505 259.8 L522 268.8M420 245.4 L462 258.4 L478 264.4 L488 260.4 L497 266.4 L505 262.4 L522 271.4M420 248.0 L462 261.0 L478 267.0 L488 263.0 L497 269.0 L505 265.0 L522 274.0M420 250.6 L462 263.6 L478 269.6 L488 265.6 L497 271.6 L505 267.6 L522 276.6M420 253.2 L462 266.2 L478 272.2 L488 268.2 L497 274.2 L505 270.2 L522 279.2M420 255.8 L462 268.8 L478 274.8 L488 270.8 L497 276.8 L505 272.8 L522 281.8M420 258.4 L462 271.4 L478 277.4 L488 273.4 L497 279.4 L505 275.4 L522 284.4M420 261.0 L462 274.0 L478 280.0 L488 276.0 L497 282.0 L505 278.0 L522 287.0M420 263.6 L462 276.6 L478 282.6 L488 278.6 L497 284.6 L505 280.6 L522 289.6M420 266.2 L462 279.2 L478 285.2 L488 281.2 L497 287.2 L505 283.2 L522 292.2M420 268.8 L462 281.8 L478 287.8 L488 283.8 L497 289.8 L505 285.8 L522 294.8M420 271.4 L462 284.4 L478 290.4 L488 286.4 L497 292.4 L505 288.4 L522 297.4M420 274.0 L462 287.0 L478 293.0 L488 289.0 L497 295.0 L505 291.0 L522 300.0M420 276.6 L462 289.6 L478 295.6 L488 291.6 L497 297.6 L505 293.6 L522 302.6M420 279.2 L462 292.2 L478 298.2 L488 294.2 L497 300.2 L505 296.2 L522 305.2M420 281.8 L462 294.8 L478 300.8 L488 296.8 L497 302.8 L505 298.8 L522 307.8M420 284.4 L462 297.4 L478 303.4 L488 299.4 L497 305.4 L505 301.4 L522 310.4M420 287.0 L462 300.0 L478 306.0 L488 302.0 L497 308.0 L505 304.0 L522 313.0M420 289.6 L462 302.6 L478 308.6 L488 304.6 L497 310.6 L505 306.6 L522 315.6M420 292.2 L462 305.2 L478 311.2 L488 307.2 L497 313.2 L505 309.2 L522 318.2" stroke="#6f6f6f" stroke-width="1.3" fill="none" clip-path="url(#lclip)"/>
<polygon points="426.5,229.7 433.0,227.0 452.0,268.0 447.3,268.0 437.3,250.5" fill="#a4a4a4" opacity="0.85"/>
<polygon points="452.0,217.5 468.0,207.0 480.0,202.5 492.5,199.0 512.0,195.5 532.0,193.6 520.0,198.0 503.0,203.5 489.0,211.0 476.0,218.0 462.0,221.5" fill="#a9a9a9"/>
<clipPath id="tclip"><polygon points="452.0,217.5 468.0,207.0 480.0,202.5 492.5,199.0 512.0,195.5 532.0,193.6 520.0,198.0 503.0,203.5 489.0,211.0 476.0,218.0 462.0,221.5"/></clipPath>
<path d="M445 194.0 L615 184.0M445 195.7 L615 185.7M445 197.4 L615 187.4M445 199.1 L615 189.1M445 200.8 L615 190.8M445 202.5 L615 192.5M445 204.2 L615 194.2M445 205.9 L615 195.9M445 207.6 L615 197.6M445 209.3 L615 199.3M445 211.0 L615 201.0M445 212.7 L615 202.7M445 214.4 L615 204.4M445 216.1 L615 206.1M445 217.8 L615 207.8M445 219.5 L615 209.5M445 221.2 L615 211.2M445 222.9 L615 212.9M445 224.6 L615 214.6M445 226.3 L615 216.3M445 228.0 L615 218.0M445 229.7 L615 219.7M445 231.4 L615 221.4M445 233.1 L615 223.1M445 234.8 L615 224.8M445 236.5 L615 226.5" stroke="#8c8c8c" stroke-width="0.7" fill="none" clip-path="url(#tclip)"/>
<polygon points="447.3,266.3 480.0,267.5 518.6,268.7 519.5,274.0 524.0,276.5 516.0,280.5 507.4,281.5 481.4,283.6 457.0,281.7 447.0,277.5 442.0,272.4" fill="url(#bumps)"/>
<polygon points="514.0,257.5 530.0,252.0 560.0,247.0 580.0,244.5 600.0,242.5 618.6,240.8 631.0,235.0 637.1,253.4 632.8,256.3 592.5,259.1 549.4,262.0 523.5,264.9 518.6,268.7" fill="url(#posts)"/>
</g>
</g>
</svg>
<!-- collapse button -->
<div class="abs" style="left:296.800px;top:46px;width:11.500px;height:11.500px;background:#f7f7f7"></div>
<svg width="9" height="7" style="left:299px;top:48.500px" viewBox="0 0 9 7"><path d="M3 0.800 L0.800 3.500 L3 6.200 M6 0.800 L8.200 3.500 L6 6.200 M4.500 0 V7" fill="none" stroke="#777" stroke-width="0.800"/></svg>
<!-- thumbnail panel -->
<div class="abs" style="left:296.800px;top:61px;width:74px;height:78.500px;background:rgba(150,150,150,0.22)"></div>
<div class="abs" style="left:300.800px;top:63.800px;width:65.200px;height:65px;background:#cfcfcf;border:1.800px solid #4a9bea;border-radius:3px"></div>
<div class="t" style="left:311.500px;top:71px;font-size:8.500px;color:#f6f6f6">1</div>
<svg width="44" height="34" style="left:310px;top:78px" viewBox="310 78 44 34">
<path d="M329 83.500 C322 85 316.500 90 316 95.500 C320 99 330 102.500 338 104.500" fill="none" stroke="#e9e9e9" stroke-width="1.500"/>
<path d="M329.500 84 C323 85.500 318 90.500 317.500 95.500" fill="none" stroke="#8b8b8b" stroke-width="2.600"/>
<path d="M334 84 C335.500 92 335.500 99 338.500 103.500 C342 107.500 347.500 105.500 347.500 98.500" fill="none" stroke="#8d8d8d" stroke-width="3"/>
<path d="M332.600 84 C334 92 334 99 337 104 C340 107.500 344 107 346 104.500" fill="none" stroke="#ececec" stroke-width="0.900"/>
<path d="M321 99.500 C326 102 332 103.500 336 104.500" fill="none" stroke="#9a9a9a" stroke-width="1.200"/>
</svg>
<!-- slicing result panel -->
<svg width="282" height="19" style="left:459.500px;top:45.500px" viewBox="0 0 282 19"><rect x="0" y="0" width="282" height="18.500" fill="#5c5f61" filter="url(#noise2)"/>
<defs><filter id="noise2" x="0" y="0" width="100%" height="100%" color-interpolation-filters="sRGB">
<feTurbulence type="fractalNoise" baseFrequency="1.05" numOctaves="1" seed="23" result="t"/>
<feColorMatrix in="t" type="matrix" values="0.9 0 0 0 0.05  0.9 0 0 0 0.05  0.9 0 0 0 0.05  0 0 0 0 1" result="n0"/><feGaussianBlur in="n0" stdDeviation="0.55" result="n"/>
<feComposite in="SourceGraphic" in2="n" operator="arithmetic" k1="0" k2="1" k3="1" k4="-0.5" result="c"/><feComposite in="c" in2="SourceGraphic" operator="in"/>
</filter></defs>
<polyline points="273.500,6.500 278,9.500 282.500,6.500" fill="none" stroke="#ddd" stroke-width="1"/></svg>
<div class="t" style="left:467px;top:48px;font-size:9px;color:#fff;font-weight:500">切片结果</div>
<div class="abs" style="left:296.800px;top:64.500px;width:503.200px;height:13.500px;background:rgba(255,255,255,0.22)"></div>
<!-- glitch lines -->
<svg width="800" height="40" style="left:0;top:55px" viewBox="0 55 800 40"><line x1="0" y1="67.300" x2="800" y2="67.300" stroke="#fff" stroke-width="0.900" stroke-dasharray="2 3 1 4 3 2 1 6 2 2" opacity="0.750"/><line x1="0" y1="82.600" x2="800" y2="82.600" stroke="#fff" stroke-width="1.300" stroke-dasharray="2 1.5 1 2 3 1.5 1 1 2 2" opacity="0.950"/></svg>
<!-- right slider -->
<div class="abs" style="left:797.500px;top:90px;width:2.500px;height:474px;background:linear-gradient(to right,#dedede,#c6c6c6)"></div>
<div class="abs" style="left:787.300px;top:122px;width:11px;height:376px;background:#fbfbfb"></div>
<div class="abs" style="left:790.500px;top:122px;width:7px;height:374px;background:#11ad45"></div>
<div class="abs" style="left:786.500px;top:116px;width:14.500px;height:14.500px;border-radius:8px;background:#11ad45;border:1px solid #f4fbf6"></div>
<svg width="9" height="9" style="left:789.200px;top:118.700px" viewBox="0 0 9 9"><path d="M0.500 4.500 h8 M4.500 0.500 v8" stroke="#d9f5e2" stroke-width="1"/></svg>
<div class="abs" style="left:786.500px;top:489px;width:14.500px;height:14.500px;border-radius:8px;background:#11ad45;border:1px solid #f4fbf6"></div>
<div class="abs" style="left:753px;top:99.500px;width:28px;height:23px;background:#fff;border-radius:1px"></div>
<svg width="5" height="5" style="left:780.500px;top:117.500px" viewBox="0 0 5 5"><path d="M0 0 L5 5 L0 5Z" fill="#fff"/></svg>
<div class="t" style="left:753px;top:100.700px;width:28px;text-align:center;font-size:9.300px;line-height:10.800px;height:22px;color:#11ad45;white-space:normal">115<br>23.00</div>
<div class="abs" style="left:756px;top:496px;width:25.200px;height:23px;background:#fff;border-radius:1px"></div>
<div class="t" style="left:756px;top:496.800px;width:25.500px;text-align:center;font-size:9.300px;line-height:10.800px;height:22px;color:#11ad45;white-space:normal">1<br>0.20</div><svg width="5" height="5" style="left:780.500px;top:496px" viewBox="0 0 5 5"><path d="M0 0 L5 0 L0 5Z" fill="#fff"/></svg>
<svg width="11.500" height="11" style="left:787.700px;top:548px" viewBox="0 0 12 12"><path d="M6 1 L11 3.500 L6 6 L1 3.500Z" fill="#11ad45"/><path d="M1 6 L6 8.500 L11 6 M1 8.500 L6 11 L11 8.500" fill="none" stroke="#11ad45" stroke-width="1.200"/></svg>
<!-- bottom slider -->
<div class="abs" style="left:395px;top:538.500px;width:22px;height:24px;border-radius:11px;background:#fafafa"></div>
<div class="abs" style="left:404px;top:548.500px;width:266px;height:10.500px;border-radius:5px;background:#fff"></div>
<div class="abs" style="left:406px;top:550px;width:262px;height:7.500px;border-radius:4px;background:#11ad45"></div>
<div class="abs" style="left:659.500px;top:547px;width:13px;height:13px;border-radius:7px;background:#11ad45"></div>
<svg width="15" height="15" style="left:400px;top:542.500px" viewBox="0 0 15 15"><path d="M1 5 V3 A2 2 0 0 1 3 1 H5 M10 1 H12 A2 2 0 0 1 14 3 V5 M1 10 V12 A2 2 0 0 0 3 14 H5" fill="none" stroke="#555" stroke-width="1.300"/><path d="M10.500 5.800 A3.400 3.400 0 1 0 10.500 11" fill="none" stroke="#555" stroke-width="1.300"/></svg>
<div class="abs" style="left:677px;top:548.500px;width:17px;height:11px;background:#fff;border-radius:1px"></div>
<svg width="4" height="5" style="left:673.500px;top:551.500px" viewBox="0 0 4 5"><path d="M4 0 L0 2.500 L4 5Z" fill="#fff"/></svg>
<div class="t" style="left:677px;top:547px;width:17px;text-align:center;font-size:8.800px;color:#11ad45">27</div>
<!-- view cube -->
<svg width="90" height="80" style="left:297px;top:486px" viewBox="297 486 90 80">
<polygon points="313,504.400 339,495 375.600,502.700 349.600,513" fill="#d0d0d0"/>
<polygon points="313,504.400 349.600,513 349.600,557.200 311.400,549.900" fill="#c9c9c9"/>
<polygon points="349.600,513 375.600,502.700 375.600,547.400 349.600,557.200" fill="#c6c6c6"/>
<path d="M310.600 549.900 L338 539.800" stroke="#b4dbb6" stroke-width="2" fill="none" opacity="0.850"/>
<path d="M342 538.300 L335.800 537.600 L337.800 543Z" fill="#b4dbb6" opacity="0.900"/>
<path d="M310.600 549.900 V508" stroke="#8686cc" stroke-width="2.400" fill="none"/>
<path d="M310.600 502.500 L307.200 509.500 H314Z" fill="#8686cc"/>
<path d="M310.600 549.900 L345 558" stroke="#cc8080" stroke-width="2.400" fill="none"/>
<path d="M351 559.300 L344.800 554.800 L343.600 560.600Z" fill="#cc8080"/>
<text x="308.400" y="496" font-family="Liberation Sans, sans-serif" font-size="8.500" fill="#7d7dc8">z</text>
<text x="356.500" y="564" font-family="Liberation Sans, sans-serif" font-size="8.500" fill="#d07070">x</text>
<text x="344.500" y="540" font-family="Liberation Sans, sans-serif" font-size="8.500" fill="#a9d6ac">y</text>
<text transform="matrix(0.960 0.200 0 1 321.500 535)" font-family="Liberation Sans, Noto Sans CJK SC, sans-serif" font-size="7.500" fill="#3a3a3a">前面</text>
<text transform="matrix(0.850 -0.330 0 1 355.500 536.500)" font-family="Liberation Sans, Noto Sans CJK SC, sans-serif" font-size="7" fill="#3a3a3a">右面</text>
<text transform="matrix(0.900 0.200 -0.900 0.350 337 503.500)" font-family="Liberation Sans, Noto Sans CJK SC, sans-serif" font-size="6" fill="#555">顶部</text>
</svg>
<!-- red arrows -->
<svg width="800" height="564" style="left:0;top:0;z-index:20" viewBox="0 0 800 564">
<g fill="#f5474c">
<path d="M462.500 493 L485.500 306.200 L480.900 305.500 L491.100 288.400 L496.100 308 L492.500 307.200 Z"/>
<path d="M725.300 140.600 L724.100 66.400 L718.800 66.400 L726.900 48.400 L734.200 65.700 L729.600 66.400 Z"/>
<path d="M81 283 L86.300 306.900 L83.300 307.800 L97.900 320.200 L97.500 299.800 L94.300 301.600 Z"/>
<path d="M57.100 367.200 L69.500 352.100 L72.200 357.400 L76.600 362.800 Z"/>
</g>
</svg>

<div id="top">
<svg width="800" height="46" style="left:0;top:0">
<defs>
<filter id="noise" x="0" y="0" width="100%" height="100%" color-interpolation-filters="sRGB">
<feTurbulence type="fractalNoise" baseFrequency="1.05" numOctaves="1" seed="7" result="t"/>
<feColorMatrix in="t" type="matrix" values="0.9 0 0 0 0.05  0.9 0 0 0 0.05  0.9 0 0 0 0.05  0 0 0 0 1" result="n0"/><feGaussianBlur in="n0" stdDeviation="0.55" result="n"/>
<feComposite in="SourceGraphic" in2="n" operator="arithmetic" k1="0" k2="1" k3="1" k4="-0.5" result="c"/><feComposite in="c" in2="SourceGraphic" operator="in"/>
</filter>
<filter id="noiseg" x="0" y="0" width="100%" height="100%" color-interpolation-filters="sRGB">
<feTurbulence type="fractalNoise" baseFrequency="1.05" numOctaves="1" seed="11" result="t"/>
<feColorMatrix in="t" type="matrix" values="0.45 0 0 0 0.275  0.45 0 0 0 0.275  0.45 0 0 0 0.275  0 0 0 0 1" result="n0"/><feGaussianBlur in="n0" stdDeviation="0.55" result="n"/>
<feComposite in="SourceGraphic" in2="n" operator="arithmetic" k1="0" k2="1" k3="1" k4="-0.5" result="c"/><feComposite in="c" in2="SourceGraphic" operator="in"/>
</filter>
</defs>
<rect x="0" y="0" width="800" height="46" fill="#76797b" filter="url(#noise)"/>
<rect x="0" y="0" width="800" height="7.5" fill="#23282b"/>
<rect x="122" y="20" width="96" height="26" fill="#43bf6d" filter="url(#noiseg)"/>
<!-- slice pill -->
<rect x="594.5" y="24" width="88.5" height="17.5" rx="8.7" fill="#8c8e8f" opacity="0.55"/>
<path d="M603.2 24 H612 V41.5 H603.2 A8.7 8.7 0 0 1 603.2 24Z" fill="#43bf6d"/>
<rect x="693.5" y="24" width="89" height="17.5" rx="8.7" fill="#43bf6d" filter="url(#noiseg)"/>
<line x1="711.7" y1="24" x2="711.7" y2="41.5" stroke="#7fd69b" stroke-width="1"/>
<!-- white glitch line -->
<line x1="0" y1="37.6" x2="800" y2="37.6" stroke="#fff" stroke-width="1.4" stroke-dasharray="1.5 2 1 3 2.5 2 1 1.5 3 2.5" opacity="0.9"/>
<!-- hamburger -->
<g stroke="#f2f2f2" stroke-width="1.2" fill="none">
<line x1="9" y1="4" x2="21" y2="4"/><line x1="9" y1="8.4" x2="21" y2="8.4"/><line x1="9" y1="12.6" x2="21" y2="12.6"/>
<polyline points="58.5,7.8 63,10.8 67.5,7.8" stroke="#e0e0e0"/>
<polyline points="598.5,31 603,34 607.5,31" stroke="#d8f5e0"/>
<polyline points="698.5,31 703,34 707.5,31" stroke="#e8fbee"/>
</g>
<line x1="81.5" y1="0" x2="81.5" y2="7.5" stroke="#565b5e" stroke-width="1"/>
<!-- save icon -->
<path d="M99 3 H107.5 L110.5 6 V13.5 H99Z" fill="none" stroke="#f4f4f4" stroke-width="1.3"/>
<rect x="101.3" y="3.5" width="5" height="3" fill="#f4f4f4"/><rect x="100.6" y="9.4" width="8.4" height="4" fill="#f4f4f4"/>
<!-- undo redo -->
<path d="M128 8 L134 3.6 V6.2 C138.5 6.2 141 8.6 141 13 C139.6 10.6 137.6 9.8 134 9.8 V12.4Z" fill="#8b8e90"/>
<path d="M171 8 L165 3.6 V6.2 C160.500 6.2 158 8.6 158 13 C159.400 10.6 161.400 9.8 165 9.8 V12.4Z" fill="#8b8e90"/>
<!-- home -->
<path d="M13 26 L20.500 33 H18.3 V39.800 H14.6 V35.6 H11.4 V39.800 H7.700 V33 H5.500Z" fill="#fff"/>
<!-- prepare cube -->
<g fill="none" stroke="#e6e8ea" stroke-width="1.1" stroke-linejoin="round">
<path d="M61.700 27.800 L67.300 30.400 V35.800 L61.700 38.600 L56.100 35.800 V30.400Z"/><path d="M56.100 30.400 L61.700 33.100 L67.300 30.400 M61.700 33.100 V38.600"/>
</g>
<!-- preview layers -->
<g fill="none" stroke="#eafff0" stroke-width="1.1" stroke-linejoin="round">
<path d="M156.500 27.800 L162 30.300 L156.500 32.800 L151 30.300Z"/><path d="M151 32.900 L156.500 35.400 L162 32.900"/><path d="M151 35.500 L156.500 38 L162 35.500"/>
</g>
<!-- device -->
<g fill="none" stroke="#e6e8ea" stroke-width="1.1">
<rect x="245.500" y="27.800" width="7" height="5"/><rect x="253.500" y="32" width="4.500" height="6.500"/><path d="M245.500 36 h5 M248 33 v3"/>
</g>
<!-- project -->
<g fill="none" stroke="#e6e8ea" stroke-width="1.1">
<rect x="340.500" y="27.800" width="12" height="10.400"/><path d="M343.500 31.500 h6 M343.500 34.700 h6"/>
</g>
<!-- calibrate -->
<g fill="none" stroke="#e6e8ea" stroke-width="1.1">
<path d="M440.500 27.500 L445 30 V35.300 L440.500 37.800 L436 35.300 V30Z"/><circle cx="440.500" cy="32.700" r="1.600"/>
</g>
<!-- ams icon -->
<rect x="559" y="28" width="3.600" height="9.500" fill="#4fc878"/><rect x="563.600" y="31" width="3.600" height="6.500" fill="#4fc878"/><circle cx="567.600" cy="28.600" r="2" fill="#b48be0"/>
<!-- window buttons -->
<g fill="none" stroke="#d5d7d8" stroke-width="1"><rect x="768" y="3.500" width="11" height="8.500" rx="1"/><line x1="768" y1="5.800" x2="779" y2="5.800"/><path d="M795 2.500 l5 5 M800 2.500 l-5 5"/></g>
</svg>
<div class="t tw" style="left:24px;top:1px;font-size:8.5px;color:#eef0f2">文件</div>
<div class="t tw" style="left:437px;top:2px;font-size:8.3px;color:#e4e6e8">未命名</div>
<div class="t tw" style="left:75px;top:26px;font-size:10.3px;color:#e9ecee">准备</div>
<div class="t tw" style="left:170px;top:26px;font-size:10.3px;color:#f0fff4">预览</div>
<div class="t tw" style="left:265px;top:26px;font-size:10.3px;color:#e9ecee">设备</div>
<div class="t tw" style="left:359.500px;top:26px;font-size:10.3px;color:#e9ecee">项目</div>
<div class="t tw" style="left:454.500px;top:26px;font-size:10.3px;color:#e9ecee">校准</div>
<div class="t tw" style="left:624px;top:26px;font-size:10.3px;color:#b9bbbc;opacity:.8">切片单盘</div>
<div class="t tw" style="left:723.500px;top:26px;font-size:10.3px;color:#fff">打印单盘</div>
</div>

</body>
</html>
